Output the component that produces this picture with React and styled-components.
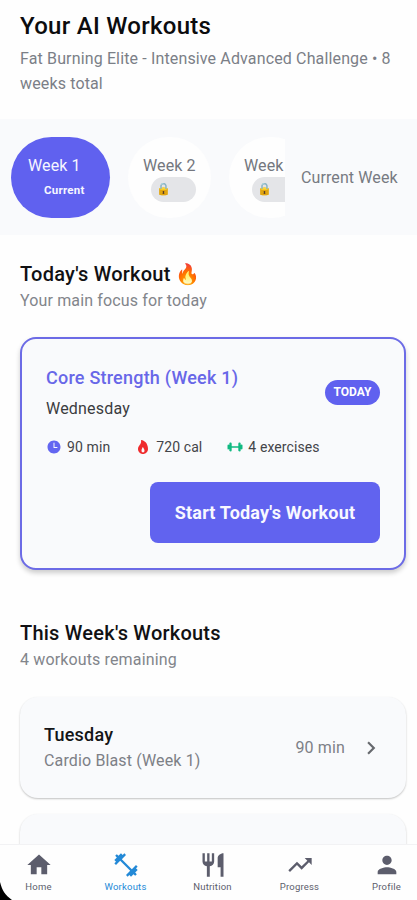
import React, { useState } from "react";
import styled, { createGlobalStyle } from "styled-components";
import {
  MdHome,
  MdFitnessCenter,
  MdRestaurant,
  MdTrendingUp,
  MdPerson,
  MdChevronRight,
} from "react-icons/md";
import { IoTime, IoFlame, IoBarbell } from "react-icons/io5";

const weeks = [
  { id: 1, title: "Week 1", current: true },
  { id: 2, title: "Week 2" },
  { id: 3, title: "Week 3" },
];

const workouts = [
  { id: 1, day: "Tuesday", name: "Cardio Blast (Week 1)", time: "90 min" },
];

const tabs = [
  { id: 1, title: "Home", icon: <MdHome /> },
  { id: 2, title: "Workouts", icon: <MdFitnessCenter /> },
  { id: 3, title: "Nutrition", icon: <MdRestaurant /> },
  { id: 4, title: "Progress", icon: <MdTrendingUp /> },
  { id: 5, title: "Profile", icon: <MdPerson /> },
];

function App() {
  const [active, setActive] = useState(2);

  return (
    <Screen>
      <GlobalStyle />
      <Content>
        <Header>
          <h1>Your AI Workouts</h1>
          <p>Fat Burning Elite - Intensive Advanced Challenge • 8 weeks total</p>
        </Header>

        <WeekBar>
          <WeekList>
            {weeks.map((week) => (
              <WeekPill key={week.id} $current={week.current}>
                <span>{week.title}</span>
                {week.current ? <Current>Current</Current> : <Lock>🔒</Lock>}
              </WeekPill>
            ))}
          </WeekList>
          <WeekLabel>Current Week</WeekLabel>
        </WeekBar>

        <SectionTitle>
          <h2>
            Today's Workout <Fire>🔥</Fire>
          </h2>
          <p>Your main focus for today</p>
        </SectionTitle>

        <TodayCard>
          <TodayTop>
            <div>
              <h3>Core Strength (Week 1)</h3>
              <p>Wednesday</p>
            </div>
            <Badge>TODAY</Badge>
          </TodayTop>
          <Stats>
            <Stat $color="#6366f1">
              <IoTime />
              90 min
            </Stat>
            <Stat $color="#ef2b2d">
              <IoFlame />
              720 cal
            </Stat>
            <Stat $color="#10b981">
              <IoBarbell />
              4 exercises
            </Stat>
          </Stats>
          <StartButton>Start Today's Workout</StartButton>
        </TodayCard>

        <SectionTitle $week>
          <h2>This Week's Workouts</h2>
          <p>4 workouts remaining</p>
        </SectionTitle>

        <WorkoutList>
          {workouts.map((item) => (
            <WorkoutRow key={item.id}>
              <div className="text">
                <h4>{item.day}</h4>
                <p>{item.name}</p>
              </div>
              <span>{item.time}</span>
              <MdChevronRight />
            </WorkoutRow>
          ))}
          <WorkoutRow />
        </WorkoutList>
      </Content>

      <TabBar>
        {tabs.map((tab) => (
          <Tab
            key={tab.id}
            $active={active === tab.id}
            onClick={() => setActive(tab.id)}
          >
            {tab.icon}
            <span>{tab.title}</span>
          </Tab>
        ))}
      </TabBar>
      <Corner viewBox="0 0 12 18">
        <path d="M0 0C2 8 5 13 12 18H0Z" fill="#000" />
      </Corner>
    </Screen>
  );
}

const GlobalStyle = createGlobalStyle`
  * {
    box-sizing: border-box;
    margin: 0;
    padding: 0;
  }
  body {
    background: #fefefe;
    font-family: Roboto, "Noto Color Emoji", sans-serif;
  }
`;

const Screen = styled.div`
  position: relative;
  width: 417px;
  height: 900px;
  display: flex;
  flex-direction: column;
  overflow: hidden;
  background: #fefefe;
`;

const Content = styled.main`
  flex: 1;
  min-height: 0;
  overflow: hidden;
`;

const Header = styled.header`
  height: 119px;
  padding: 10px 20px 0;

  h1 {
    font-size: 24px;
    font-weight: 500;
    line-height: 32px;
    letter-spacing: 0.28px;
    color: #0c0c0e;
  }
  p {
    margin-top: 4px;
    font-size: 16px;
    line-height: 25px;
    letter-spacing: 0.14px;
    color: #7b7f87;
  }
`;

const WeekBar = styled.section`
  height: 116px;
  display: flex;
  align-items: center;
  padding: 0 0 0 11px;
  background: #f9fafc;
`;

const WeekList = styled.div`
  width: 274px;
  display: flex;
  gap: 18px;
  overflow: hidden;
`;

const WeekPill = styled.div`
  flex: none;
  height: 81px;
  padding: 18px 16px 0;
  border-radius: 41px;
  background: ${(props) => (props.$current ? "#6061ef" : "#fefefe")};
  color: ${(props) => (props.$current ? "#f6f6ff" : "#74777e")};
  width: ${(props) => (props.$current ? "99px" : "83px")};
  padding-left: ${(props) => (props.$current ? "17px" : "15px")};
  display: flex;
  flex-direction: column;

  > span {
    font-size: 16px;
    line-height: 22px;
    letter-spacing: 0.1px;
    white-space: nowrap;
  }
`;

const Current = styled.b`
  margin-left: 16px;
  font-size: 11.5px;
  font-weight: 700;
  line-height: 26px;
  letter-spacing: 0.25px;
`;

const Lock = styled.div`
  width: 45px;
  height: 25px;
  margin-left: 8px;
  padding-left: 5px;
  border-radius: 13px;
  background: #e4e5e8;
  font-size: 12px;
  line-height: 25px;
`;

const WeekLabel = styled.div`
  margin-left: 16px;
  font-size: 16px;
  letter-spacing: 0.1px;
  color: #777a82;
  white-space: nowrap;
`;

const SectionTitle = styled.div`
  height: ${(props) => (props.$week ? "127px" : "102px")};
  padding: ${(props) => (props.$week ? "49px" : "25px")} 20px 0;

  h2 {
    font-size: 20px;
    font-weight: 500;
    line-height: 28px;
    letter-spacing: 0.23px;
    color: #111113;
  }
  p {
    font-size: 16px;
    line-height: 26px;
    letter-spacing: 0.14px;
    color: #82858b;
  }
`;

const Fire = styled.span`
  font-size: 20px;
`;

const TodayCard = styled.section`
  height: 233px;
  margin: 0 11px 0 20px;
  padding: 26px 24px 0 24px;
  display: flex;
  flex-direction: column;
  border: 2px solid #6c6be6;
  border-radius: 16px;
  background: #f9fafc;
  box-shadow: 0 3px 5px rgba(0, 0, 0, 0.2);
`;

const TodayTop = styled.div`
  display: flex;
  justify-content: space-between;
  align-items: center;

  h3 {
    font-size: 18px;
    font-weight: 500;
    line-height: 26px;
    letter-spacing: 0.22px;
    color: #6867e8;
  }
  p {
    margin-top: 6px;
    font-size: 16px;
    line-height: 23px;
    letter-spacing: 0.2px;
    color: #3b3c40;
  }
`;

const Badge = styled.span`
  width: 55px;
  height: 25px;
  border-radius: 13px;
  background: #6061ef;
  color: #fff;
  font-size: 12px;
  font-weight: 700;
  line-height: 25px;
  text-align: center;
`;

const Stats = styled.div`
  display: flex;
  gap: 25px;
  margin-top: 17px;
`;

const Stat = styled.div`
  display: flex;
  align-items: center;
  gap: 5px;
  font-size: 14px;
  line-height: 20px;
  letter-spacing: 0.1px;
  color: #434449;
  white-space: nowrap;

  svg {
    width: 16px;
    height: 16px;
    color: ${(props) => props.$color};
  }
`;

const StartButton = styled.button`
  align-self: flex-end;
  width: 230px;
  height: 61px;
  margin-top: 25px;
  border: none;
  border-radius: 8px;
  background: #6163ef;
  color: #f8f8ff;
  font-family: inherit;
  font-size: 18px;
  font-weight: 700;
  letter-spacing: 0.18px;
  cursor: pointer;
`;

const WorkoutList = styled.div`
  display: flex;
  flex-direction: column;
  gap: 16px;
  padding: 0 11px 0 20px;
`;

const WorkoutRow = styled.div`
  height: 101px;
  padding: 0 24px;
  display: flex;
  align-items: center;
  border-radius: 18px;
  background: #f9fafc;
  box-shadow: 0 1px 2px rgba(0, 0, 0, 0.24);
  color: #7d8086;
  font-size: 16px;
  letter-spacing: 0.14px;

  .text {
    flex: 1;
  }
  h4 {
    font-size: 18px;
    font-weight: 500;
    line-height: 27px;
    letter-spacing: 0.22px;
    color: #151517;
  }
  p {
    line-height: 26px;
  }
  svg {
    width: 26px;
    height: 26px;
    margin-left: 13px;
    margin-right: -2px;
    color: #67696e;
  }
`;

const TabBar = styled.nav`
  flex: none;
  height: 56px;
  display: grid;
  grid-template-columns: repeat(5, 87px);
  margin-left: -5px;
  border-top: 1px solid #f2f2f4;
  background: #fefefe;
`;

const Tab = styled.div`
  display: flex;
  flex-direction: column;
  align-items: center;
  padding-top: 6px;
  cursor: pointer;
  color: ${(props) => (props.$active ? "#2389d7" : "#5c5d6c")};

  svg {
    width: 28px;
    height: 28px;
  }
  span {
    margin-top: 2px;
    font-size: 9.5px;
    line-height: 12px;
    letter-spacing: 0.2px;
  }
`;

// dark edge of the rounded device screen
const Corner = styled.svg`
  position: absolute;
  left: 0;
  bottom: 0;
  width: 12px;
  height: 18px;
`;

export default App;
